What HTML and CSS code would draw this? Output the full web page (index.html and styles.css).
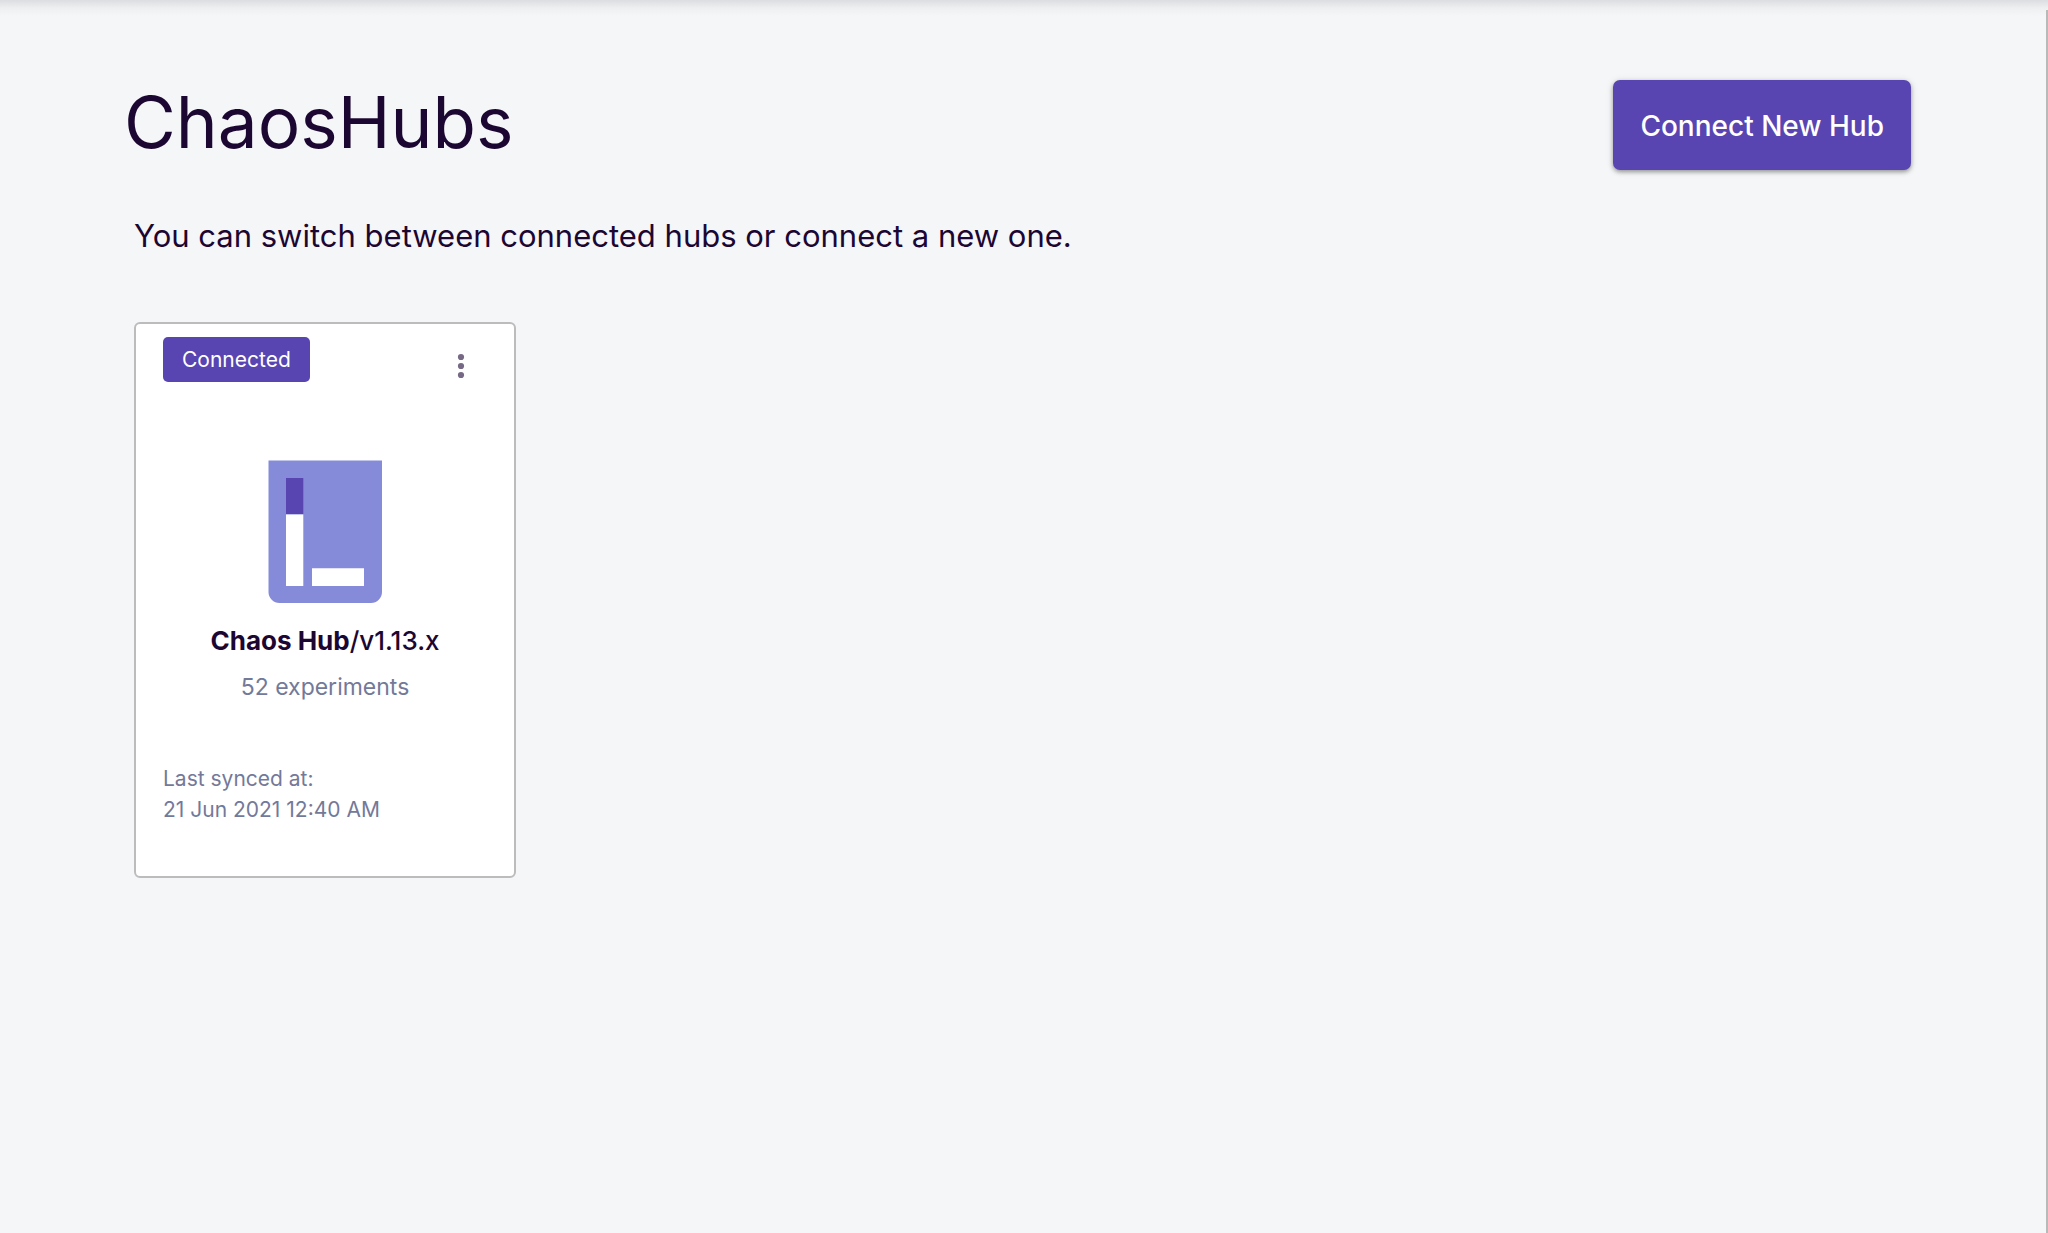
FILE: index.html
```html
<!DOCTYPE html>
<html lang="en">
<head>
<meta charset="utf-8">
<meta name="viewport" content="width=device-width, initial-scale=1">
<title>ChaosHubs</title>
<link rel="stylesheet" href="styles.css">
</head>
<body>
<div class="shade"></div>
<div class="scroll-edge"></div>
<main class="page">
  <header class="page-header">
    <h1 class="title">ChaosHubs</h1>
    <button class="connect-button" type="button">Connect New Hub</button>
  </header>
  <div class="content">
    <p class="intro">You can switch between connected hubs or connect a new one.</p>
    <section class="hubs">
      <article class="card">
        <div class="card-top">
          <span class="badge">Connected</span>
          <button class="menu-button" type="button" aria-label="More options">
            <svg width="8" height="26" viewBox="0 0 8 26" fill="currentColor" aria-hidden="true"><circle cx="4" cy="4" r="3.1"/><circle cx="4" cy="13" r="3.1"/><circle cx="4" cy="22" r="3.1"/></svg>
          </button>
        </div>
        <svg class="logo" width="114" height="143" viewBox="0 0 114 143" aria-hidden="true">
          <path fill="#858bd8" d="M.5 .5H114V132A11 11 0 0 1 103 143H11.500A11 11 0 0 1 .5 132Z"/>
          <path fill="#5845b2" d="M18 18H35.300V54H18Z"/>
          <path fill="#fff" d="M18 54.500H35.300V126H18ZM44 108.300H96V126H44Z"/>
        </svg>
        <h2 class="hub-name"><strong>Chaos Hub</strong>/v1.13.x</h2>
        <p class="count">52 experiments</p>
        <p class="synced">Last synced at:<br>21 Jun 2021 12:40 AM</p>
      </article>
    </section>
  </div>
</main>
</body>
</html>
```
FILE: styles.css
```css
* { box-sizing: border-box; }
body {
  margin: 0;
  min-height: 100vh;
  background: #f5f6f8;
  color: #1c0732;
  font-family: Inter, "Liberation Sans", sans-serif;
}
h1, h2, p { margin: 0; font-weight: 400; }
button { border: 0; font: inherit; cursor: pointer; }
.shade {
  position: absolute;
  inset: 0 0 auto;
  height: 16px;
  background: linear-gradient(#dcdde0, #eeeff1 50%, #f5f6f8);
}
.scroll-edge {
  position: absolute;
  top: 10px;
  right: 0;
  bottom: 0;
  width: 2px;
  background: #b9b9b9;
}
.page { padding: 80px 137px 80px 124px; }
.page-header {
  display: flex;
  justify-content: space-between;
  align-items: flex-start;
}
.title { font-size: 71px; line-height: 84px; }
.connect-button {
  height: 90px;
  padding: 1px 27px 0;
  border-radius: 7px;
  background: #5845b2;
  color: #fff;
  font-size: 28px;
  font-weight: 500;
  box-shadow: 0 2px 4px rgba(0, 0, 0, .35), 0 1px 8px rgba(0, 0, 0, .1);
}
.content { padding-left: 10px; }
.intro { margin-top: 42px; font-size: 31px; line-height: 48px; }
.hubs { display: flex; margin-top: 62px; }
.card {
  display: flex;
  flex-direction: column;
  width: 382px;
  padding: 13px 27px 51px;
  border: 2px solid #bcbcbc;
  border-radius: 6px;
  background: #fff;
}
.card-top {
  display: flex;
  justify-content: space-between;
  align-items: flex-start;
}
.badge {
  padding: 0 19px;
  border-radius: 5px;
  background: #5845b2;
  color: #fff;
  font-size: 21px;
  line-height: 45px;
}
.menu-button {
  display: flex;
  padding: 16px 22px;
  background: none;
  color: #766985;
}
.logo { align-self: center; margin-top: 65px; }
.hub-name { margin-top: 22px; font-size: 26px; font-weight: 500; line-height: 32px; text-align: center; }
.count { margin-top: 14px; color: #737999; font-size: 23px; line-height: 32px; text-align: center; }
.synced { margin-top: 60px; color: #737999; font-size: 21px; line-height: 31px; }
```
